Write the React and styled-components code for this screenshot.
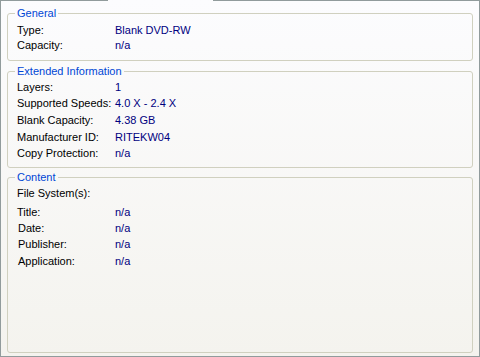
import React from 'react';
import styled, { createGlobalStyle } from 'styled-components';

const GlobalStyle = createGlobalStyle`
  html, body {
    margin: 0;
    padding: 0;
    background: #ffffff;
  }
  body {
    font-family: 'Liberation Sans', Arial, sans-serif;
    font-size: 11px;
  }
`;

const Page = styled.div`
  width: 480px;
  height: 357px;
  display: flex;
  flex-direction: column;
  box-sizing: border-box;
  background: linear-gradient(to bottom, #fcfcfe 0%, #f4f3ee 100%);
  border-left: 1px solid #919b9c;
  border-right: 1px solid #919b9c;
  border-bottom: 1px solid #919b9c;
`;

const TopEdge = styled.div`
  display: flex;
  height: 1px;
  margin: 0 -1px;
  flex-shrink: 0;
`;

const EdgePiece = styled.div`
  height: 1px;
  width: ${(p) => (p.$w ? `${p.$w}px` : 'auto')};
  flex: ${(p) => (p.$w ? 'none' : '1')};
  background: ${(p) => (p.$gap ? 'transparent' : '#919b9c')};
`;

const Body = styled.div`
  flex: 1;
  display: flex;
  flex-direction: column;
  padding: 6px 6px 4px 6px;
`;

const Group = styled.fieldset`
  margin: 0;
  margin-top: ${(p) => p.$mt || 0}px;
  height: ${(p) => p.$h}px;
  box-sizing: border-box;
  border: 1px solid #d0d0bf;
  border-radius: 3px;
  padding: ${(p) => p.$pt || 0}px 6px 0 9px;
  min-width: 0;
`;

const Legend = styled.legend`
  padding: 0 2px;
  margin-left: -2px;
  color: #0046d5;
  line-height: 13px;
  font-size: 11px;
`;

const Row = styled.div`
  display: grid;
  grid-template-columns: ${(p) => (p.$indent ? 97 : 98)}px 1fr;
  padding-left: ${(p) => (p.$indent ? 1 : 0)}px;
  height: ${(p) => p.$h}px;
  line-height: 13px;
  white-space: nowrap;
`;

const Label = styled.span`
  color: #000000;
`;

const Value = styled.span`
  color: #00007f;
`;

const groups = [
  {
    title: 'General',
    mt: 0,
    h: 54,
    pt: 4,
    rows: [
      { label: 'Type:', value: 'Blank DVD-RW', h: 15 },
      { label: 'Capacity:', value: 'n/a', h: 13 },
    ],
  },
  {
    title: 'Extended Information',
    mt: 4,
    h: 103,
    pt: 3,
    rows: [
      { label: 'Layers:', value: '1', h: 16 },
      { label: 'Supported Speeds:', value: '4.0 X - 2.4 X', h: 17 },
      { label: 'Blank Capacity:', value: '4.38 GB', h: 17 },
      { label: 'Manufacturer ID:', value: 'RITEKW04', h: 16 },
      { label: 'Copy Protection:', value: 'n/a', h: 13 },
    ],
  },
  {
    title: 'Content',
    mt: 3,
    h: 182,
    pt: 3,
    rows: [
      { label: 'File System(s):', value: '', h: 19 },
      { label: 'Title:', value: 'n/a', h: 16 },
      { label: 'Date:', value: 'n/a', h: 16, indent: true },
      { label: 'Publisher:', value: 'n/a', h: 17, indent: true },
      { label: 'Application:', value: 'n/a', h: 13, indent: true },
    ],
  },
];

export default function App() {
  return (
    <>
      <GlobalStyle />
      <Page>
        <TopEdge>
          <EdgePiece $w={108} />
          <EdgePiece $w={105} $gap />
          <EdgePiece />
        </TopEdge>
        <Body>
          {groups.map((g) => (
            <Group key={g.title} $mt={g.mt} $h={g.h} $pt={g.pt}>
              <Legend>{g.title}</Legend>
              {g.rows.map((r) => (
                <Row key={r.label} $h={r.h} $indent={r.indent}>
                  <Label>{r.label}</Label>
                  <Value>{r.value}</Value>
                </Row>
              ))}
            </Group>
          ))}
        </Body>
      </Page>
    </>
  );
}
